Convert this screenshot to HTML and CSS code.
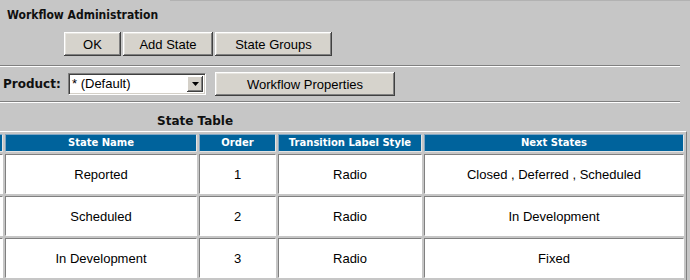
FILE: index.html
```html
<!DOCTYPE html>
<html>
<head>
<meta charset="utf-8">
<link rel="stylesheet" href="styles.css">
</head>
<body>
<div class="topline"></div>
<div class="title">Workflow Administration</div>
<div class="actions">
  <button class="btn btn-ok">OK</button>
  <button class="btn btn-add">Add State</button>
  <button class="btn btn-groups">State Groups</button>
</div>
<div class="rule"></div>
<div class="product-row">
  <span class="product-label">Product:</span>
  <div class="select">
    <span class="select-text">* (Default)</span>
    <span class="select-arrow"><svg width="7" height="4" viewBox="0 0 7 4"><path d="M0 0h7L3.5 4z" fill="#000"/></svg></span>
  </div>
  <button class="btn btn-props">Workflow Properties</button>
</div>
<div class="rule rule-2"></div>
<div class="caption">State Table</div>
<table class="states">
  <thead>
    <tr>
      <th class="c0"></th>
      <th class="c1">State Name</th>
      <th class="c2">Order</th>
      <th class="c3">Transition Label Style</th>
      <th class="c4">Next States</th>
    </tr>
  </thead>
  <tbody>
    <tr>
      <td></td>
      <td>Reported</td>
      <td>1</td>
      <td>Radio</td>
      <td>Closed , Deferred , Scheduled</td>
    </tr>
    <tr>
      <td></td>
      <td>Scheduled</td>
      <td>2</td>
      <td>Radio</td>
      <td>In Development</td>
    </tr>
    <tr>
      <td></td>
      <td>In Development</td>
      <td>3</td>
      <td>Radio</td>
      <td>Fixed</td>
    </tr>
  </tbody>
</table>
</body>
</html>
```
FILE: styles.css
```css
html, body {
  margin: 0;
  padding: 0;
  background: #c6c6c6;
  overflow: hidden;
}
body {
  font-family: "Liberation Sans", Arial, sans-serif;
  font-size: 13px;
  color: #000;
}
.topline {
  height: 1px;
  margin-left: 170px;
  background: #b2b2b2;
}
.title {
  margin-top: 6px;
  padding-left: 7px;
  height: 16px;
  line-height: 16px;
  font-family: "DejaVu Sans Condensed", "DejaVu Sans", sans-serif;
  font-weight: bold;
  font-size: 12px;
  color: #101010;
}
.actions {
  display: flex;
  gap: 2px;
  margin-top: 9px;
  padding-left: 64px;
}
.btn {
  height: 24px;
  padding: 0;
  margin: 0;
  border: none;
  background: #d6d3cc;
  font-family: "Liberation Sans", Arial, sans-serif;
  font-size: 13px;
  color: #000;
  text-align: center;
  box-shadow: inset -1px -1px #404040, inset 1px 1px #ffffff, inset -2px -2px #808080, inset 2px 2px #e6e4df;
}
.btn-ok { width: 57px; }
.btn-add { width: 90px; }
.btn-groups { width: 117px; }
.btn-props { width: 180px; margin-left: 9px; }
.rule {
  width: 680px;
  height: 0;
  margin-top: 9px;
  border-top: 1px solid #808080;
  border-bottom: 1px solid #ffffff;
}
.rule-2 {
  margin-top: 5px;
}
.product-row {
  display: flex;
  align-items: center;
  margin-top: 5px;
  height: 24px;
}
.product-label {
  padding-left: 3px;
  width: 62px;
  font-family: "DejaVu Sans", Verdana, sans-serif;
  font-weight: bold;
  font-size: 12px;
  color: #101010;
}
.select {
  display: flex;
  align-items: center;
  justify-content: space-between;
  box-sizing: border-box;
  width: 138px;
  height: 22px;
  margin-left: 3px;
  background: #fff;
  border-top: 1px solid #808080;
  border-left: 1px solid #808080;
  border-right: 1px solid #ffffff;
  border-bottom: 1px solid #ffffff;
  box-shadow: inset 1px 1px #404040, inset -1px -1px #d4d0c8;
  padding: 2px 2px 2px 3px;
}
.select-text {
  line-height: 16px;
}
.select-arrow {
  display: flex;
  align-items: center;
  justify-content: center;
  width: 16px;
  height: 16px;
  box-sizing: border-box;
  background: #d4d0c8;
  box-shadow: inset -1px -1px #404040, inset 1px 1px #ffffff, inset -2px -2px #808080;
}
.caption {
  margin-top: 10px;
  padding-left: 157px;
  height: 16px;
  line-height: 16px;
  font-family: "DejaVu Sans", Verdana, sans-serif;
  font-weight: bold;
  font-size: 12px;
  color: #101010;
}
.states {
  margin-top: 2px;
  margin-left: -10px;
  width: 697px;
  table-layout: fixed;
  border-collapse: separate;
  border-spacing: 2px;
  border-top: 1px solid #ffffff;
  border-left: 1px solid #ffffff;
  border-right: 1px solid #808080;
  border-bottom: 1px solid #808080;
}
.states th, .states td {
  padding: 0;
  text-align: center;
  vertical-align: middle;
  border-top: 1px solid #808080;
  border-left: 1px solid #808080;
  border-right: 1px solid #ffffff;
  border-bottom: 1px solid #ffffff;
}
.states th {
  height: 16px;
  background: #00639c;
  color: #fff;
  font-family: "DejaVu Sans", Verdana, sans-serif;
  font-weight: bold;
  font-size: 10px;
  line-height: 12px;
  border-color: #7fa6c4 #e4e4e4 #e4e4e4 #7fa6c4;
}
.states td {
  height: 38px;
  background: #fff;
  font-size: 13px;
}
.c0 { width: 8px; }
.c1 { width: 190px; }
.c2 { width: 75px; }
.c3 { width: 142px; }
.c4 { width: 258px; }
```
